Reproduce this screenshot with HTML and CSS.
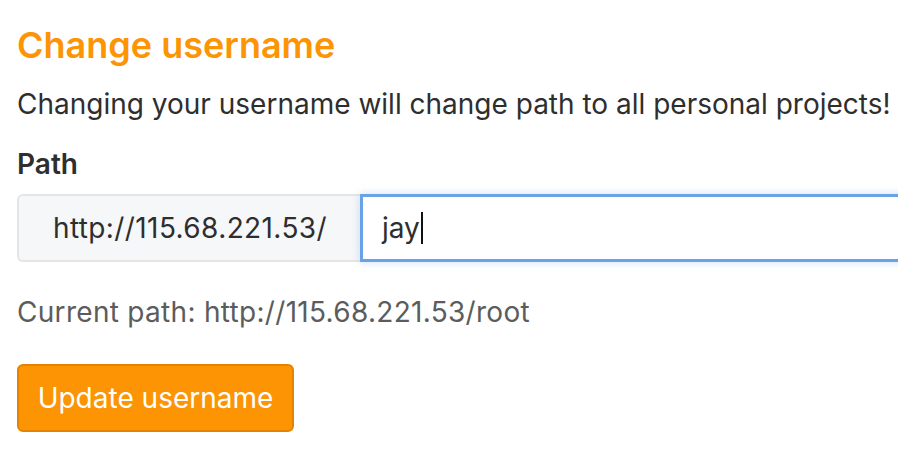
FILE: index.html
```html
<!DOCTYPE html>
<html>
<head>
<meta charset="utf-8">
<link rel="stylesheet" href="styles.css">
</head>
<body>
<div class="page">
  <h4 class="title">Change username</h4>
  <p class="intro">Changing your username will change path to all personal projects!</p>
  <label class="label">Path</label>
  <div class="input-group">
    <div class="addon">http://115.68.221.53/</div>
    <div class="input"><span>jay</span><span class="caret"></span></div>
  </div>
  <p class="help">Current path: http://115.68.221.53/root</p>
  <button class="btn">Update username</button>
</div>
</body>
</html>
```
FILE: styles.css
```css
html, body { margin: 0; padding: 0; background: #fff; }
body { font-family: Inter, "Liberation Sans", Arial, sans-serif; color: #2e2e2e; overflow: hidden; }
.page { padding: 0 0 0 17px; width: 920px; }
.title { margin: 0; padding-top: 24px; font-size: 36px; line-height: 42px; font-weight: 600; color: #fc9403; }
.intro { margin: 18px 0 0; font-size: 28px; line-height: 40px; }
.label { display: block; margin-top: 20px; font-size: 28px; line-height: 40px; font-weight: 600; }
.input-group { display: flex; margin-top: 10px; height: 68px; }
.addon { width: 343px; box-sizing: border-box; background: #f6f7f9; border: 2px solid #e5e5e5; border-right: none; border-radius: 6px 0 0 6px; font-size: 28px; letter-spacing: 0.4px; display: flex; align-items: center; justify-content: center; padding-left: 1px; color: #2e2e2e; }
.input { flex: 1; box-sizing: border-box; border: 3px solid #6aa2e6; box-shadow: 0 0 8px rgba(106,162,230,0.35); font-size: 28px; display: flex; align-items: center; padding-left: 19px; color: #2e2e2e; }
.caret { display: inline-block; width: 2px; height: 32px; background: #111; margin-left: 1px; }
.help { margin: 30px 0 0; font-size: 28px; line-height: 40px; letter-spacing: 0.3px; color: #5c5c5c; }
.btn { margin-top: 32px; height: 68px; width: 277px; padding: 0; background: #fc9403; border: 2px solid #e58200; border-radius: 6px; color: #fff; font-family: inherit; font-size: 28px; }
```
